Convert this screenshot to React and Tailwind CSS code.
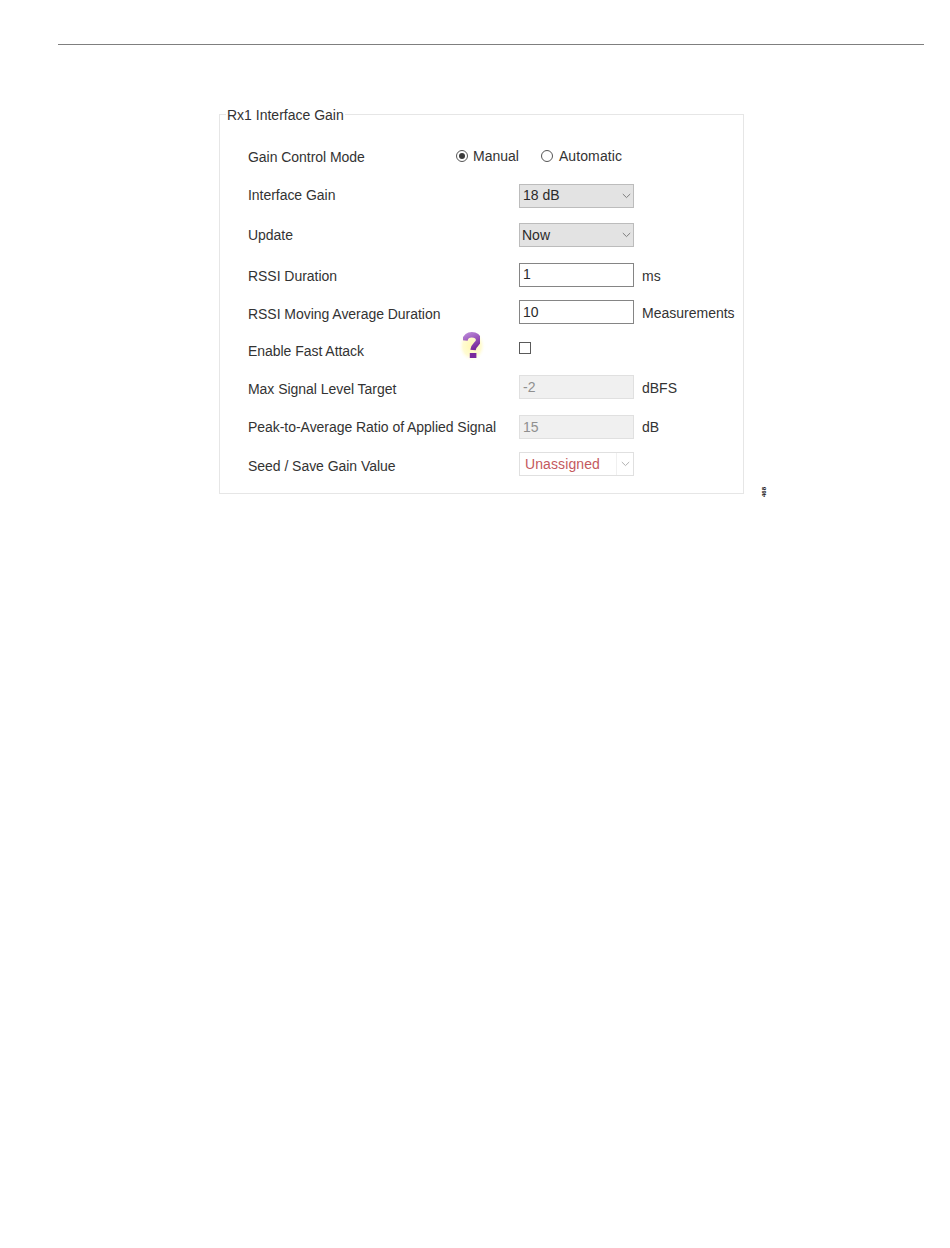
import React from "react";

const FONT = "font-['Liberation_Sans','Arial',sans-serif]";

function Chevron({ color = "#7d7d7d" }) {
  return (
    <svg width="9" height="6" viewBox="0 0 9 6" fill="none" className="shrink-0">
      <path d="M0.8 1 L4.5 4.6 L8.2 1" stroke={color} strokeWidth="1" />
    </svg>
  );
}

function Radio({ checked }) {
  return (
    <span className="w-3 h-3 rounded-full border border-[#555] bg-white flex items-center justify-center shrink-0">
      {checked && <span className="w-[6px] h-[6px] rounded-full bg-[#3a3a3a]" />}
    </span>
  );
}

function Select({ value, pad = "pl-[3px]", text = "" }) {
  return (
    <div className={`w-[115px] h-6 bg-[#e3e3e3] border border-[#bcbcbc] flex items-center justify-between ${pad} pr-[2px] text-[#2b2b2b]`}>
      <span className={text}>{value}</span>
      <Chevron />
    </div>
  );
}

function Field({ value, disabled, text = "" }) {
  return (
    <div
      className={
        disabled
          ? "w-[115px] h-6 bg-[#f0f0f0] border border-[#e0e0e0] flex items-center pl-[3px] text-[#8f8f8f]"
          : "w-[115px] h-6 bg-white border border-[#858585] flex items-center pl-[3px] text-[#2b2b2b]"
      }
    >
      <span className={text}>{value}</span>
    </div>
  );
}

function Row({ label, mt, labelW = "w-[271px]", nudge = "", children }) {
  return (
    <div className={`flex items-center h-6 ${mt}`}>
      <div className={`${labelW} ${nudge} shrink-0 text-[#333] tracking-[-0.04px] whitespace-nowrap`}>{label}</div>
      {children}
    </div>
  );
}

function Unit({ children, nudge = "pt-[2px]" }) {
  return <span className={`ml-2 text-[#333] whitespace-nowrap ${nudge}`}>{children}</span>;
}

function HelpIcon() {
  return (
    <svg width="26" height="32" viewBox="0 0 26 32" className="shrink-0">
      <defs>
        <radialGradient id="glow" cx="50%" cy="50%" r="50%">
          <stop offset="0%" stopColor="#fff27a" stopOpacity="0.6" />
          <stop offset="70%" stopColor="#fff696" stopOpacity="0.42" />
          <stop offset="100%" stopColor="#fffbe0" stopOpacity="0" />
        </radialGradient>
        <linearGradient id="qm" x1="0" y1="0" x2="0.4" y2="1">
          <stop offset="0%" stopColor="#b580d4" />
          <stop offset="100%" stopColor="#7a2a9c" />
        </linearGradient>
        <filter id="soft" x="-10%" y="-10%" width="120%" height="120%">
          <feGaussianBlur stdDeviation="0.35" />
        </filter>
      </defs>
      <ellipse cx="13" cy="17" rx="13" ry="15" fill="url(#glow)" />
      <g filter="url(#soft)">
        <path
          d="M6 11.5 C6.4 7.6 9.4 5.8 12.8 5.8 C16.6 5.8 19.6 8 19.6 11 C19.6 15 14.4 15.4 14 21"
          fill="none"
          stroke="url(#qm)"
          strokeWidth="5.4"
        />
        <rect x="10.8" y="24" width="6.6" height="5" fill="#7a2a9c" />
      </g>
    </svg>
  );
}

export default function App() {
  return (
    <div className={`${FONT} w-[950px] h-[1248px] bg-white text-[14px] leading-none pt-11 pl-[58px]`}>
      <div className="w-[866px] h-px bg-[#7f7f7f]" />
      <div className="flex items-end ml-[161px] mt-[69px]">
        <fieldset className="w-[525px] h-[388px] border border-[#e6e6e6] pl-7 pr-2 m-0 -mt-2">
          <legend className="-ml-[22px] px-px text-[#333] h-4 leading-[18px]">Rx1 Interface Gain</legend>
          <Row label="Gain Control Mode" labelW="w-[208px]" mt="mt-[23px]">
            <label className="flex items-center gap-[5px] -mt-[2px]">
              <Radio checked />
              <span className="text-[#333]">Manual</span>
            </label>
            <label className="flex items-center gap-[6px] ml-[22px] -mt-[2px]">
              <Radio />
              <span className="text-[#333] tracking-[0.1px]">Automatic</span>
            </label>
          </Row>
          <Row label="Interface Gain" nudge="pb-[2px]" mt="mt-[15px]">
            <Select value="18 dB" text="pb-[2px]" />
          </Row>
          <Row label="Update" mt="mt-[15px]">
            <Select value="Now" pad="pl-[2px]" />
          </Row>
          <Row label="RSSI Duration" nudge="pt-[2px]" mt="mt-[16px]">
            <Field value="1" text="pb-[2px]" />
            <Unit>ms</Unit>
          </Row>
          <Row label="RSSI Moving Average Duration" nudge="pt-[4px]" mt="mt-[13px]">
            <Field value="10" />
            <Unit>Measurements</Unit>
          </Row>
          <Row label="Enable Fast Attack" labelW="w-[211px]" mt="mt-[15px]">
            <div className="w-[60px] h-6 flex items-center -mt-[12px]">
              <HelpIcon />
            </div>
            <span className="w-3 h-3 border border-[#5a5a5a] bg-white -mt-[6px]" />
          </Row>
          <Row label="Max Signal Level Target" nudge="pt-[4px]" mt="mt-[12px]">
            <Field value="-2" disabled />
            <Unit>dBFS</Unit>
          </Row>
          <Row label="Peak-to-Average Ratio of Applied Signal" mt="mt-[16px]">
            <Field value="15" disabled />
            <Unit nudge="">dB</Unit>
          </Row>
          <Row label="Seed / Save Gain Value" nudge="pt-[4px]" mt="mt-[13px]">
            <div className="w-[115px] h-6 bg-white border border-[#e0e0e0] flex items-center">
              <span className="flex-1 pl-[5px] text-[#c4595d] tracking-[0.1px]">Unassigned</span>
              <span className="w-[17px] h-full border-l border-[#f0f0f0] flex items-center justify-center">
                <Chevron color="#b0b0b0" />
              </span>
            </div>
          </Row>
        </fieldset>
        <span className="ml-[17px] -mb-[3px] w-[6px] h-[10px] flex items-center justify-center text-[6px] font-bold text-[#111] -rotate-90 whitespace-nowrap">
          468
        </span>
      </div>
    </div>
  );
}
